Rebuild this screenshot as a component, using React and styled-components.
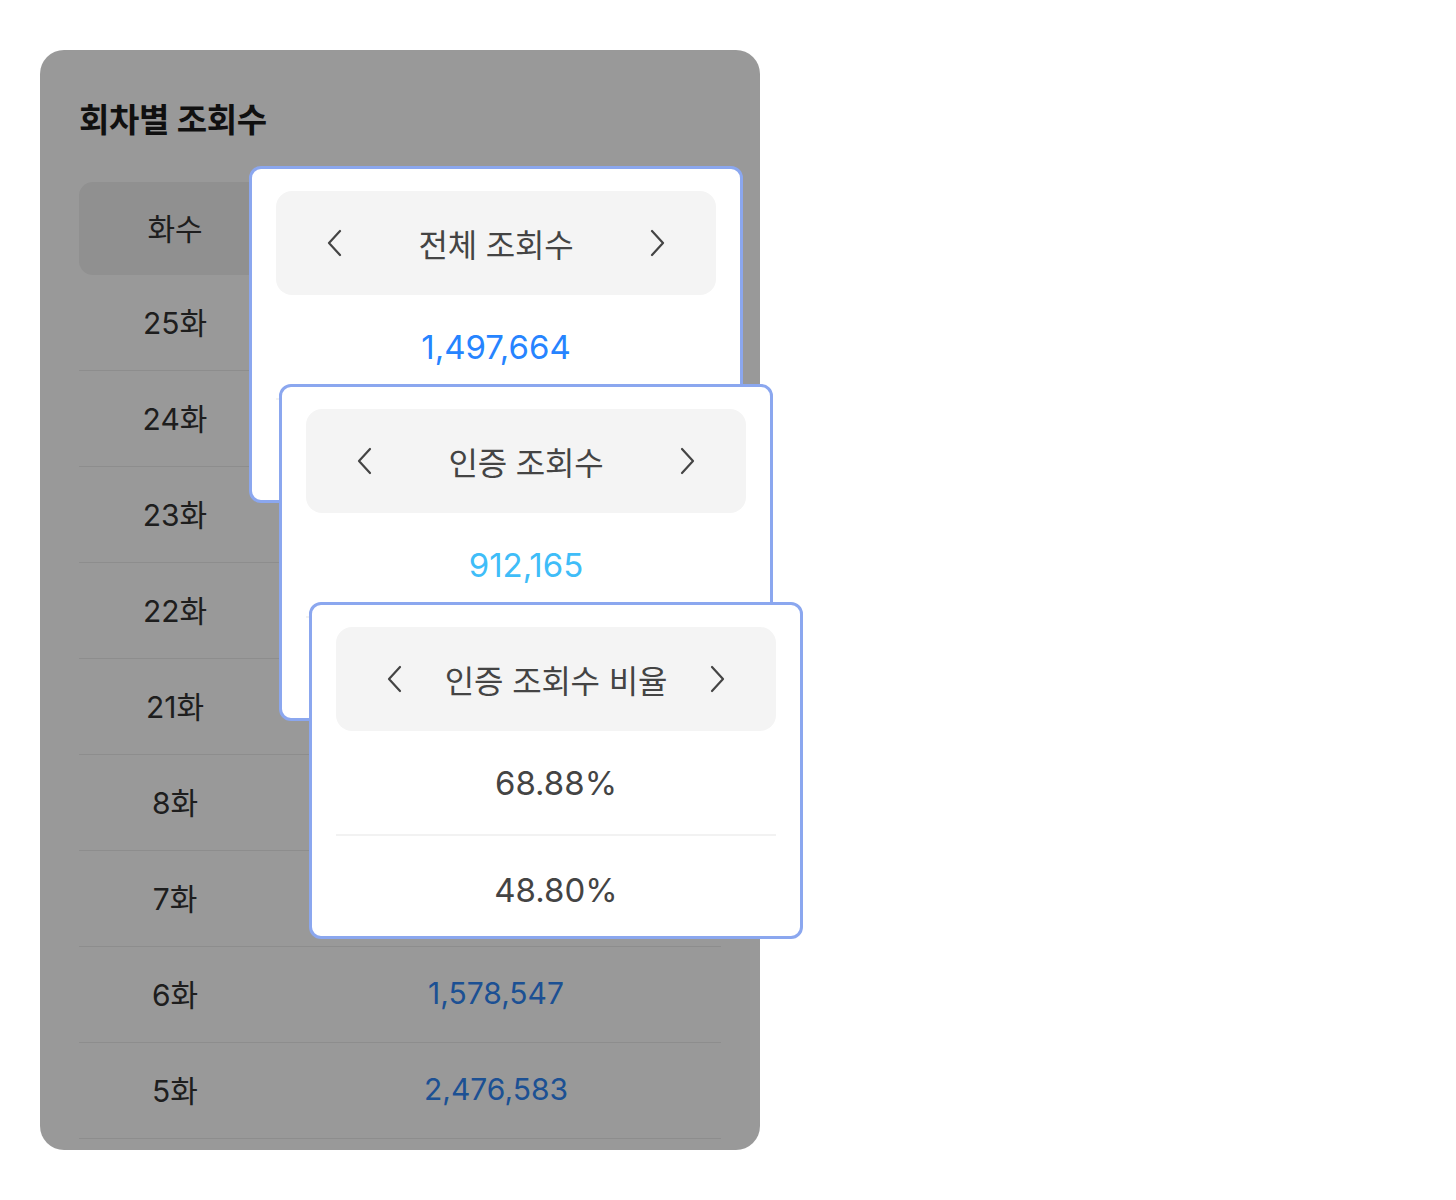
import styled, { createGlobalStyle } from 'styled-components';

const GlobalStyle = createGlobalStyle`
  * { box-sizing: border-box; }
  body {
    margin: 0;
    background: #ffffff;
    font-family: Inter, 'Noto Sans CJK KR', sans-serif;
  }
`;

const Page = styled.div`
  padding: 50px 40px;
`;

const Card = styled.section`
  position: relative;
  width: 720px;
  height: 1100px;
  padding: 50px 39px 0;
  background: #ffffff;
  border-radius: 24px;
`;

const Title = styled.h2`
  margin: 0 0 42px;
  font-size: 33px;
  line-height: 40px;
  font-weight: 700;
  color: #1c1c1c;
  letter-spacing: -0.3px;
`;

const Table = styled.div`
  width: 642px;
`;

const Row = styled.div`
  display: grid;
  grid-template-columns: 192px 1fr;
  height: ${(p) => (p.head ? '93px' : '96px')};
  padding-bottom: 3px;
  align-items: center;
  text-align: center;
  font-size: 30px;
  color: #333333;
  background: ${(p) => (p.head ? '#f0f0f0' : 'transparent')};
  border-radius: ${(p) => (p.head ? '14px' : '0')};
  border-bottom: ${(p) => (p.head ? 'none' : '1px solid #ebebeb')};
`;

const Views = styled.span`
  color: #2f86f6;
  font-size: 30px;
`;

const Dim = styled.div`
  position: absolute;
  inset: 0;
  background: rgba(0, 0, 0, 0.4);
  border-radius: 24px;
`;

const Popup = styled.div`
  position: absolute;
  left: ${(p) => 209 + p.index * 30}px;
  top: ${(p) => 116 + p.index * 218}px;
  width: 494px;
  height: 337px;
  padding: 22px 24px 0;
  background: #ffffff;
  border: 3px solid #8ba7ef;
  border-radius: 12px;
`;

const PopupHead = styled.div`
  display: flex;
  align-items: center;
  justify-content: space-between;
  height: 104px;
  padding: 0 51px;
  background: #f4f4f4;
  border-radius: 16px;
`;

const HeadTitle = styled.span`
  font-size: 32px;
  color: #444444;
  letter-spacing: -0.2px;
`;

const Arrow = styled.button`
  display: flex;
  padding: 0;
  border: 0;
  background: none;
  cursor: pointer;
`;

const Value = styled.div`
  display: flex;
  align-items: center;
  justify-content: center;
  height: ${(p) => (p.last ? '99px' : '105px')};
  padding-top: ${(p) => (p.last ? '9px' : '0')};
  font-size: 33px;
  color: ${(p) => p.color};
  border-bottom: ${(p) => (p.last ? 'none' : '2px solid #f2f2f2')};
`;

const Chevron = ({ dir }) => (
  <svg width="16" height="28" viewBox="0 0 16 28" fill="none">
    <polyline
      points={dir === 'left' ? '13 2 2 14 13 26' : '3 2 14 14 3 26'}
      stroke="#444"
      strokeWidth="2.2"
      strokeLinecap="round"
      strokeLinejoin="round"
    />
  </svg>
);

const rows = [
  ['25화', '1,497,664'],
  ['24화', '1,612,230'],
  ['23화', '1,702,118'],
  ['22화', '1,655,904'],
  ['21화', '1,731,402'],
  ['8화', '1,820,377'],
  ['7화', '1,690,215'],
  ['6화', '1,578,547'],
  ['5화', '2,476,583'],
];

const popups = [
  { title: '전체 조회수', values: ['1,497,664', '1,612,230'], color: '#2684ff' },
  { title: '인증 조회수', values: ['912,165', '786,788'], color: '#3fbdf8' },
  { title: '인증 조회수 비율', values: ['68.88%', '48.80%'], color: '#444444' },
];

export default function App() {
  return (
    <Page>
      <GlobalStyle />
      <Card>
        <Title>회차별 조회수</Title>
        <Table>
          <Row head>
            <span>화수</span>
            <span>전체 조회수</span>
          </Row>
          {rows.map(([ep, views]) => (
            <Row key={ep}>
              <span>{ep}</span>
              <Views>{views}</Views>
            </Row>
          ))}
        </Table>
        <Dim />
        {popups.map((p, i) => (
          <Popup key={p.title} index={i}>
            <PopupHead>
              <Arrow>
                <Chevron dir="left" />
              </Arrow>
              <HeadTitle>{p.title}</HeadTitle>
              <Arrow>
                <Chevron dir="right" />
              </Arrow>
            </PopupHead>
            <Value color={p.color}>{p.values[0]}</Value>
            <Value color={p.color} last>
              {p.values[1]}
            </Value>
          </Popup>
        ))}
      </Card>
    </Page>
  );
}
